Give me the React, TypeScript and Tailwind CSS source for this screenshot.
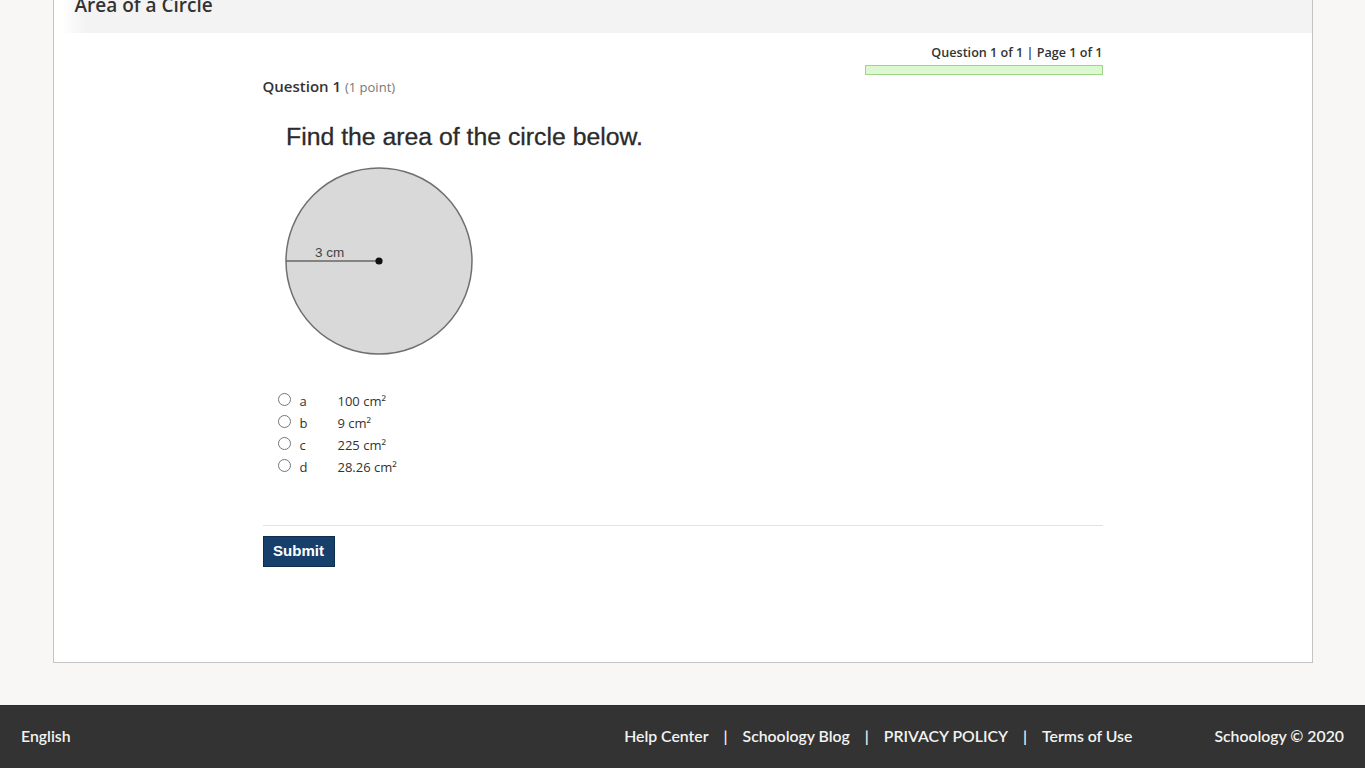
import React from 'react';

const options = [
  { key: 'a', text: '100 cm²' },
  { key: 'b', text: '9 cm²' },
  { key: 'c', text: '225 cm²' },
  { key: 'd', text: '28.26 cm²' },
];

function CircleFigure() {
  return (
    <svg width="400" height="250" viewBox="0 0 400 250" className="block">
      <text
        x="23"
        y="35"
        fontFamily="'Liberation Sans', Arial, sans-serif"
        fontSize="24.8"
        fill="#2b2b2b"
        stroke="#2b2b2b"
        strokeWidth="0.3"
      >
        Find the area of the circle below.
      </text>
      <circle cx="116" cy="151" r="93" fill="#d9d9d9" stroke="#6f6f6f" strokeWidth="1.5" />
      <line x1="23" y1="151" x2="116" y2="151" stroke="#666" strokeWidth="1.5" />
      <circle cx="116" cy="151" r="3.6" fill="#111" />
      <text
        x="52"
        y="147"
        fontFamily="'Liberation Sans', Arial, sans-serif"
        fontSize="13.5"
        fill="#444"
      >
        3 cm
      </text>
    </svg>
  );
}

export default function App() {
  return (
    <div className="min-h-screen bg-[#f8f7f5] font-['Open_Sans',sans-serif] text-[#333]">
      {/* Main card */}
      <div className="mx-auto w-[1260px] bg-white border-x border-b border-[#c4c4c4]">
        {/* Title bar */}
        <div className="ml-[8px] h-[33px] overflow-hidden bg-[linear-gradient(to_right,#ffffff,#f3f3f3_24px)]">
          <h1 className="-mt-[6px] pl-[13px] text-[19px] leading-[23px] font-semibold text-[#333]">
            Area of a Circle
          </h1>
        </div>

        <div className="mx-auto w-[840px] pt-[10px] pb-[95px]">
          {/* Progress */}
          <div className="flex flex-col items-end">
            <div className="text-[12.6px] leading-[19px] font-semibold text-[#333]">
              Question 1 of 1 | Page 1 of 1
            </div>
            <div className="mt-[3px] h-[10px] w-[238px] bg-[#dcf8d0] border border-[#9fd58a]" />
          </div>

          {/* Question */}
          <div className="mt-[1px] text-[15px] leading-[20px] font-semibold text-[#333]">
            Question 1 <span className="text-[13px] font-normal text-[#777]">(1 point)</span>
          </div>

          <div className="mt-[13px]">
            <CircleFigure />
          </div>

          <div className="mt-[30px] pl-[15px]">
            {options.map((o) => (
              <label key={o.key} className="flex items-start h-[22px] text-[13px] leading-[22px] text-[#333]">
                <input type="radio" name="q1" className="m-0 mt-[3px] w-[13px] h-[13px]" />
                <span className="ml-[9px] w-[38px]">{o.key}</span>
                <span>{o.text}</span>
              </label>
            ))}
          </div>

          <div className="mt-[47px] border-t border-[#e3e3e3]" />

          <button className="mt-[10px] h-[31px] w-[72px] bg-[#173f6c] border border-[#0e2c4e] text-white text-[15px] font-bold font-['Liberation_Sans',Arial,sans-serif]">
            Submit
          </button>
        </div>
      </div>

      {/* Footer */}
      <footer className="mt-[42px] h-[63px] bg-[#333] border-t border-[#2c2c2c] px-[21px] pb-[2px] flex items-center justify-between font-['Lato',sans-serif] text-[15.8px] font-semibold text-[#f2f2f2]">
        <span>English</span>
        <div className="flex items-center">
          <a>Help Center</a>
          <span className="mx-[15px]">|</span>
          <a>Schoology Blog</a>
          <span className="mx-[15px]">|</span>
          <a>PRIVACY POLICY</a>
          <span className="mx-[15px]">|</span>
          <a>Terms of Use</a>
          <span className="ml-[82px]">Schoology © 2020</span>
        </div>
      </footer>
    </div>
  );
}
